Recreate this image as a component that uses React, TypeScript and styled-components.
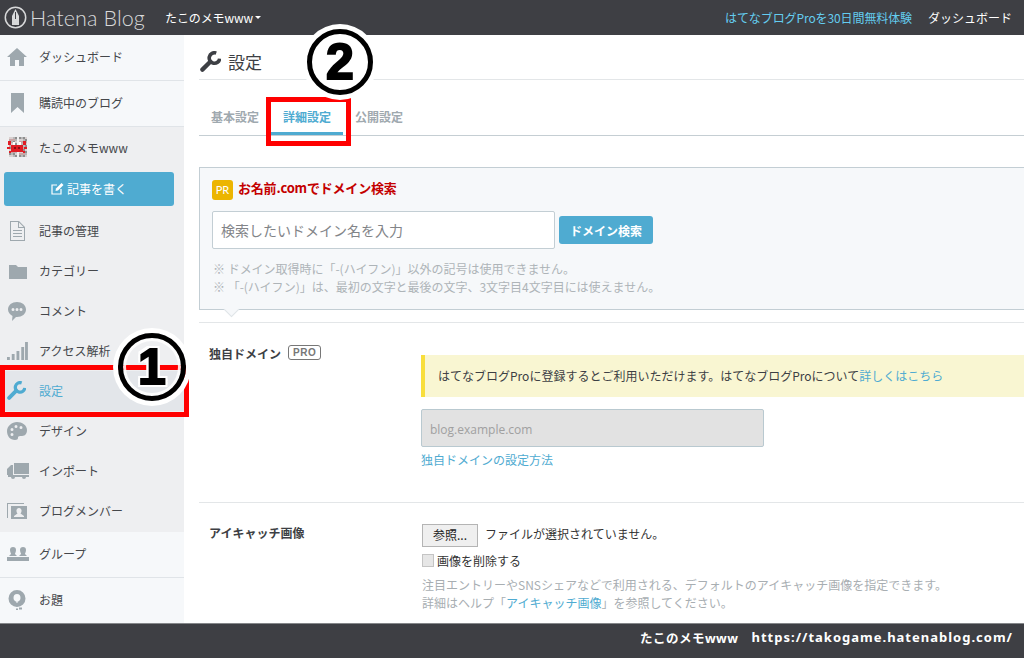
import React from "react";
import styled, { createGlobalStyle } from "styled-components";

const Global = createGlobalStyle`
  html, body { margin: 0; padding: 0; background: #fff; }
  body { font-family: "Noto Sans CJK JP", "Noto Sans", sans-serif; font-size: 12px; color: #3d3f44; }
  * { box-sizing: border-box; }
`;

const Page = styled.div`
  position: relative; width: 1024px; height: 658px; overflow: hidden;
  display: flex; flex-direction: column;
`;
const Header = styled.header`
  height: 35px; flex: none; background: #3e3f44; display: flex; align-items: center; padding: 0 12px 0 4px;
`;
const Logo = styled.div`
  display: flex; align-items: center; gap: 3px; color: #d8d9da; width: 161px;
  font: 300 21.500px "Lato", sans-serif; letter-spacing: 0.1px; white-space: nowrap;
`;
const BlogSwitch = styled.div`
  color: #fff; display: flex; align-items: center; gap: 2px; font-size: 12px; letter-spacing: -0.1px;
  &::after { content: ""; border: 3px solid transparent; border-top-color: #fff; margin-top: 3px; }
`;
const HeaderRight = styled.nav`
  margin-left: auto; display: flex; gap: 16px; font-size: 12px; color: #fff;
`;
const ProLink = styled.span`color: #64cdf0; letter-spacing: -0.1px;`;

const Body = styled.div`flex: 1; display: flex; min-height: 0; overflow: hidden;`;
const Sidebar = styled.aside`
  width: 184px; flex: none; background: #f6f8fa; display: flex; flex-direction: column;
`;
const TopItem = styled.div`
  height: 46px; flex: none; display: flex; align-items: center; padding: 0 0 2px 7px;
  border-bottom: 1px solid #e0e4e8; color: #45474b;
`;
const BlogSection = styled.div`
  background: #eeeff1; height: 405px; flex: none; display: flex; flex-direction: column;
`;
const BlogHead = styled.div`
  height: 45px; display: flex; align-items: center; padding: 0 0 5px 7px; color: #45474b; flex: none;
`;
const WriteButton = styled.div`
  margin: 0 10px 5px 4px; height: 34px; flex: none; background: #4fabd1; border-radius: 3px; color: #fff;
  display: flex; align-items: center; justify-content: center; gap: 3px; font-size: 12px; padding-bottom: 1px;
`;
const NavItem = styled.div<{ $active?: boolean }>`
  height: 40px; flex: none; display: flex; align-items: center; padding: 0 0 1px 7px;
  background: ${p => (p.$active ? "#e3e6ea" : "transparent")};
  color: ${p => (p.$active ? "#4fabd1" : "#45474b")};
`;
const IconSlot = styled.span`
  width: 32px; flex: none; display: flex; align-items: center; color: #9ea8ae;
`;
const ActiveIcon = styled(IconSlot)`color: #4fabd1;`;

const Main = styled.main`flex: 1; padding-left: 15px; overflow: hidden; min-width: 0;`;
const Column = styled.div`width: 860px;`;
const TitleBar = styled.div`
  height: 45px; display: flex; align-items: center; gap: 7px; padding: 9px 0 0 1px;
  border-bottom: 1px solid #e3e6e8; font-size: 17px; color: #3d3f44;
`;
const Tabs = styled.div`
  height: 56px; display: flex; align-items: flex-end; border-bottom: 1px solid #c5ced3;
`;
const Tab = styled.div<{ $active?: boolean }>`
  width: 72px; height: 36px; text-align: center; line-height: 36px; font-weight: 700; font-size: 12px;
  color: ${p => (p.$active ? "#4fabd1" : "#9fa9af")};
  border-bottom: 3px solid ${p => (p.$active ? "#4fabd1" : "transparent")};
`;
const PrBox = styled.section`
  position: relative; margin-top: 31px; height: 143px; background: #f6f8fa;
  border: 1px solid #c3ced4; padding: 11px 12px;
`;
const PrHead = styled.div`display: flex; align-items: center; gap: 5px; height: 21px;`;
const PrBadge = styled.span`
  width: 21px; height: 20px; background: #ecb500; border-radius: 3px; color: #fff; font-size: 11px;
  display: flex; align-items: center; justify-content: center; font-family: "Lato", sans-serif;
`;
const PrTitle = styled.span`
  color: #c40000; font-weight: 700; font-size: 13px; letter-spacing: -0.2px; line-height: 17px; margin-bottom: 4px;
`;
const SearchRow = styled.div`display: flex; align-items: center; gap: 4px; margin-top: 11px;`;
const SearchInput = styled.div`
  width: 343px; height: 38px; background: #fff; border: 1px solid #c3ced4; border-radius: 2px;
  padding-left: 8px; line-height: 36px; font-size: 14px; color: #828488;
`;
const SearchButton = styled.div`
  width: 94px; height: 28px; background: #4fabd1; color: #fff; border-radius: 3px; font-weight: 700;
  font-size: 12px; display: flex; align-items: center; justify-content: center;
`;
const Notes = styled.div`margin-top: 11px; color: #aeb4b8; font-size: 12px; line-height: 18px; margin-left: 1px; white-space: nowrap; letter-spacing: -0.02px;`;
const Arrow = styled.span`
  position: absolute; left: 26px; bottom: -6px; width: 11px; height: 11px; background: #f6f8fa;
  transform: rotate(45deg); border-right: 1px solid #dfe4e7; border-bottom: 1px solid #dfe4e7;
`;
const Row = styled.section<{ $top: number; $height: number }>`
  display: grid; grid-template-columns: 222px 1fr; padding-top: ${p => p.$top}px; height: ${p => p.$height}px;
  border-top: 1px solid #e3e6e8;
`;
const SpacedRow = styled(Row)`margin-top: 12px;`;
const Label = styled.div`
  padding-left: 10px; font-weight: 700; font-size: 12px; color: #3d3f44; display: flex; align-items: flex-start; gap: 7px; line-height: 18px;
`;
const ProTag = styled.span`
  border: 1px solid #777; border-radius: 3px; color: #777; font: 700 10px/13px "Liberation Sans", sans-serif;
  padding: 0 4px; height: 15px; letter-spacing: 0.5px;
`;
const DomainFields = styled.div`margin-top: 10px;`;
const Alert = styled.div`
  height: 42px; background: #f9f6d2; border-left: 4px solid #f8de3c; padding-left: 13px; line-height: 42px; color: #3d3f44;
`;
const Link = styled.span`color: #4fabd1;`;
const DisabledInput = styled.div`
  width: 343px; height: 38px; margin-top: 12px; background: #e2e2e2; border: 1px solid #b9c9d0; border-radius: 2px;
  padding-left: 8px; color: #a0a0a0; font: 12px/39px "Open Sans", sans-serif;
`;
const SubLink = styled.div`margin-top: 4px; line-height: 18px; color: #4fabd1;`;
const FileRow = styled.div`display: flex; align-items: center; gap: 7px; margin-left: 1px;`;
const FileName = styled.span`margin-bottom: 4px; color: #333;`;
const FileButton = styled.div`
  width: 56px; height: 23px; background: #efefef; border: 1px solid #b4b4b4; font-size: 12px; color: #222;
  display: flex; align-items: center; justify-content: center; padding-bottom: 2px;
`;
const CheckRow = styled.div`display: flex; align-items: center; gap: 3px; margin: 6px 0 0 1px; height: 14px; color: #333;`;
const CheckBox = styled.span`width: 12px; height: 13px; background: #e6e6e6; border: 1px solid #c4c4c4;`;
const Help = styled.div`margin-top: 9px; margin-left: 1px; color: #a8aeb2; line-height: 18px; white-space: nowrap;`;
const Footer = styled.footer`
  height: 35px; flex: none; background: #3e3f44; border-top: 1px solid #85878a; color: #fff; font-weight: 700;
  display: flex; justify-content: flex-end; align-items: flex-start; padding: 4px 11px 0 0;
  font-size: 13px; letter-spacing: 1px; gap: 13px;
  font-family: "Noto Sans", "Noto Sans CJK JP", sans-serif;
`;
const FooterBlog = styled.span`letter-spacing: 0.5px; font-size: 12.500px;`;
const RedBox = styled.div<{ $l: number; $t: number; $w: number; $h: number }>`
  position: absolute; left: ${p => p.$l}px; top: ${p => p.$t}px; width: ${p => p.$w}px; height: ${p => p.$h}px;
  border: 5px solid #f00;
`;
const Mark = styled.div<{ $l: number; $t: number; $size: number; $fill?: boolean }>`
  position: absolute; left: ${p => p.$l}px; top: ${p => p.$t}px; width: ${p => p.$size}px; height: ${p => p.$size}px;
  border-radius: 50%; background: ${p => (p.$fill ? "#fff" : "transparent")};
  border: 5px solid #000; box-shadow: 0 0 0 5px #fff, inset 0 0 0 3px rgba(255, 255, 255, 0.85);
  display: flex; align-items: center; justify-content: center;
  font: 700 50px/1 "Liberation Sans", sans-serif; color: #000; -webkit-text-stroke: 2px #000;
  text-shadow: 3px 0 #fff, -3px 0 #fff, 0 3px #fff, 0 -3px #fff, 3px 3px #fff, -3px 3px #fff, 3px -3px #fff, -3px -3px #fff;
`;

const svg = (w: number, h: number, children: React.ReactNode) => (
  <svg width={w} height={h} viewBox={`0 0 ${w} ${h}`} fill="currentColor" aria-hidden>{children}</svg>
);
const Wrench = ({ size }: { size: number }) => (
  <svg width={size} height={size} viewBox="0 0 22 22" fill="none" stroke="currentColor" aria-hidden>
    <path d="M2.500 19.500 10.500 11.500" strokeWidth="4.500" strokeLinecap="round" />
    <path d="M17 2.200A5.500 5.500 0 1 0 20.600 8" strokeWidth="3.800" />
  </svg>
);
const Home = () => svg(20, 18, <path d="M10 0 20 9h-3v9h-5v-6H8v6H3V9H0z" />);
const Bookmark = () => svg(20, 20, <path d="M4 0h13v20l-6.500-6L4 20z" />);
const FileIcon = () => svg(20, 20, <path fillRule="evenodd" d="M3 0h9l6 6v14H3zm1 1v18h13V7h-6V1zm8 .500V6h4.500zM6 9h9v1H6zm0 3h9v1H6zm0 3h9v1H6z" />);
const Folder = () => svg(20, 16, <path d="M2 2h7l2 2h9v12H2z" />);
const Comment = () => svg(20, 20, <path fillRule="evenodd" d="M10 1c5 0 9 3 9 7.500S15 16 10 16H9l-4 4 .5-5C3 13.500 1 11.500 1 8.500 1 4 5 1 10 1zM6 7a1.500 1.500 0 1 0 0 3 1.500 1.500 0 0 0 0-3zm4 0a1.500 1.500 0 1 0 0 3 1.500 1.500 0 0 0 0-3zm4 0a1.500 1.500 0 1 0 0 3 1.500 1.500 0 0 0 0-3z" />);
const Bars = () => svg(22, 18, <path d="M0 15h3v3H0zm5-3h3v6H5zm5-3h3v9h-3zm5-4h3v13h-3zm4-5h3v18h-3z" transform="scale(.95 1)" />);
const Palette = () => svg(20, 18, <path fillRule="evenodd" d="M10 0c5 0 10 3 10 8s-3 6-6 6-3 1-3 2-1 2-3 2C3 18 0 14 0 9s5-9 10-9zM5 6a1.500 1.500 0 1 0 0 3 1.500 1.500 0 0 0 0-3zm4-3a1.500 1.500 0 1 0 0 3 1.500 1.500 0 0 0 0-3zm5 1a1.500 1.500 0 1 0 0 3 1.500 1.500 0 0 0 0-3zM5 11a1.500 1.500 0 1 0 0 3 1.500 1.500 0 0 0 0-3z" />);
const Truck = () => svg(22, 16, <path fillRule="evenodd" d="M7 0h15v11H7zM1 5l3-3h2v10H0V6zM1 12h21v2h-3a2 2 0 0 1-4 0H8a2 2 0 0 1-4 0H1z" />);
const Member = () => svg(20, 16, <path fillRule="evenodd" d="M0 0h17v1H1v14H0zM4 3h16v13H4zm8 2a2.500 2.500 0 0 0-2.500 3c0 1 .5 2 1 2.500L7 13v1h10v-1l-3.500-2.500c.5-.5 1-1.500 1-2.500A2.500 2.500 0 0 0 12 5z" />);
const Group = () => svg(22, 14, <path d="M6 0a3 3 0 0 1 3 3c0 2-1 3-1 4l2 2H2l2-2c0-1-1-2-1-4a3 3 0 0 1 3-3zm10 0a3 3 0 0 1 3 3c0 2-1 3-1 4l2 2h-8l2-2c0-1-1-2-1-4a3 3 0 0 1 3-3zM0 10h22v4H0z" />);
const Odai = () => svg(20, 20, <path fillRule="evenodd" d="M10 0a8.500 8.500 0 0 1 0 17 8.500 8.500 0 0 1 0-17zm0 4a3.500 4 0 0 0-3.500 4c0 2 1.500 3.500 3 3.800V13h1v-1.200c1.500-.3 3-1.800 3-3.800A3.500 4 0 0 0 10 4zM12 17.500h3v2h-3zM9 18.500h2v1.500H9z" />);
const Nib = () => (
  <svg width="23" height="23" viewBox="0 0 23 23" aria-hidden>
    <circle cx="11.500" cy="11.500" r="10.200" fill="none" stroke="#d8d9da" strokeWidth="1.500" />
    <path d="M11.500 3 15 10v9H8v-9z" fill="#d8d9da" />
    <path d="M11.500 6v7" stroke="#3e3f44" strokeWidth="1" />
  </svg>
);
const noise = ["#f0f0f0", "#b8b8b8", "#8e8e8e", "#d8d0d0", "#c9a5a5"];
const Avatar = () => (
  <svg width="20" height="20" viewBox="0 0 20 20" aria-hidden>
    {Array.from({ length: 100 }, (_, n) => (
      <rect key={n} x={(n % 10) * 2} y={Math.floor(n / 10) * 2} width="2" height="2" fill={noise[(n * 7 + (n % 10) * (n % 3)) % 5]} />
    ))}
    <path d="M4 8h12v7H4zM1 4h3v4H1zm15 0h3v4h-3zM0 10h3v2H0zm17 0h3v2h-3zM2 14h2v2H2zm14 0h2v2h-2z" fill="#e01c24" />
    <path d="M6 5h2v3H6zm6 0h2v3h-2z" fill="#fff" />
    <path d="M7 10h2v2H7zm4 0h2v2h-2z" fill="#8a0f14" />
  </svg>
);
const Pencil = () => (
  <svg width="13" height="13" viewBox="0 0 13 13" aria-hidden>
    <path d="M10 7v5H1V3h5" fill="none" stroke="#fff" strokeWidth="1.200" />
    <path d="M10.500 1 12.500 3 7 8.500 4.500 9 5 6.500z" fill="#fff" />
  </svg>
);

const navItems: [string, React.ReactNode][] = [
  ["記事の管理", <FileIcon />],
  ["カテゴリー", <Folder />],
  ["コメント", <Comment />],
  ["アクセス解析", <Bars />],
];
const navItems2: [string, React.ReactNode][] = [
  ["デザイン", <Palette />],
  ["インポート", <Truck />],
  ["ブログメンバー", <Member />],
];

export default function App() {
  return (
    <Page>
      <Global />
      <Header>
        <Logo><Nib />Hatena Blog</Logo>
        <BlogSwitch>たこのメモwww</BlogSwitch>
        <HeaderRight>
          <ProLink>はてなブログProを30日間無料体験</ProLink>
          <span>ダッシュボード</span>
        </HeaderRight>
      </Header>
      <Body>
        <Sidebar>
          <TopItem><IconSlot><Home /></IconSlot>ダッシュボード</TopItem>
          <TopItem><IconSlot><Bookmark /></IconSlot>購読中のブログ</TopItem>
          <BlogSection>
            <BlogHead><IconSlot><Avatar /></IconSlot>たこのメモwww</BlogHead>
            <WriteButton><Pencil />記事を書く</WriteButton>
            {navItems.map(([t, i]) => <NavItem key={t}><IconSlot>{i}</IconSlot>{t}</NavItem>)}
            <NavItem $active><ActiveIcon><Wrench size={19} /></ActiveIcon>設定</NavItem>
            {navItems2.map(([t, i]) => <NavItem key={t}><IconSlot>{i}</IconSlot>{t}</NavItem>)}
          </BlogSection>
          <TopItem><IconSlot><Group /></IconSlot>グループ</TopItem>
          <TopItem><IconSlot><Odai /></IconSlot>お題</TopItem>
        </Sidebar>
        <Main>
          <Column>
            <TitleBar><Wrench size={21} />設定</TitleBar>
            <Tabs>
              <Tab>基本設定</Tab>
              <Tab $active>詳細設定</Tab>
              <Tab>公開設定</Tab>
            </Tabs>
            <PrBox>
              <PrHead><PrBadge>PR</PrBadge><PrTitle>お名前.comでドメイン検索</PrTitle></PrHead>
              <SearchRow>
                <SearchInput>検索したいドメイン名を入力</SearchInput>
                <SearchButton>ドメイン検索</SearchButton>
              </SearchRow>
              <Notes>
                ※ ドメイン取得時に「-(ハイフン)」以外の記号は使用できません。<br />
                ※ 「-(ハイフン)」は、最初の文字と最後の文字、3文字目4文字目には使えません。
              </Notes>
              <Arrow />
            </PrBox>
            <SpacedRow $top={22} $height={180}>
              <Label>独自ドメイン<ProTag>PRO</ProTag></Label>
              <DomainFields>
                <Alert>はてなブログProに登録するとご利用いただけます。はてなブログProについて<Link>詳しくはこちら</Link></Alert>
                <DisabledInput>blog.example.com</DisabledInput>
                <SubLink>独自ドメインの設定方法</SubLink>
              </DomainFields>
            </SpacedRow>
            <Row $top={21} $height={125}>
              <Label>アイキャッチ画像</Label>
              <div>
                <FileRow><FileButton>参照...</FileButton><FileName>ファイルが選択されていません。</FileName></FileRow>
                <CheckRow><CheckBox />画像を削除する</CheckRow>
                <Help>
                  注目エントリーやSNSシェアなどで利用される、デフォルトのアイキャッチ画像を指定できます。<br />
                  詳細はヘルプ「<Link>アイキャッチ画像</Link>」を参照してください。
                </Help>
              </div>
            </Row>
          </Column>
        </Main>
      </Body>
      <Footer><FooterBlog>たこのメモwww</FooterBlog><span>https://takogame.hatenablog.com/</span></Footer>
      <RedBox $l={0} $t={365} $w={189} $h={52} />
      <RedBox $l={266} $t={97} $w={85} $h={49} />
      <Mark $l={118} $t={333} $size={68}>1</Mark>
      <Mark $l={307} $t={29} $size={66} $fill>2</Mark>
    </Page>
  );
}
